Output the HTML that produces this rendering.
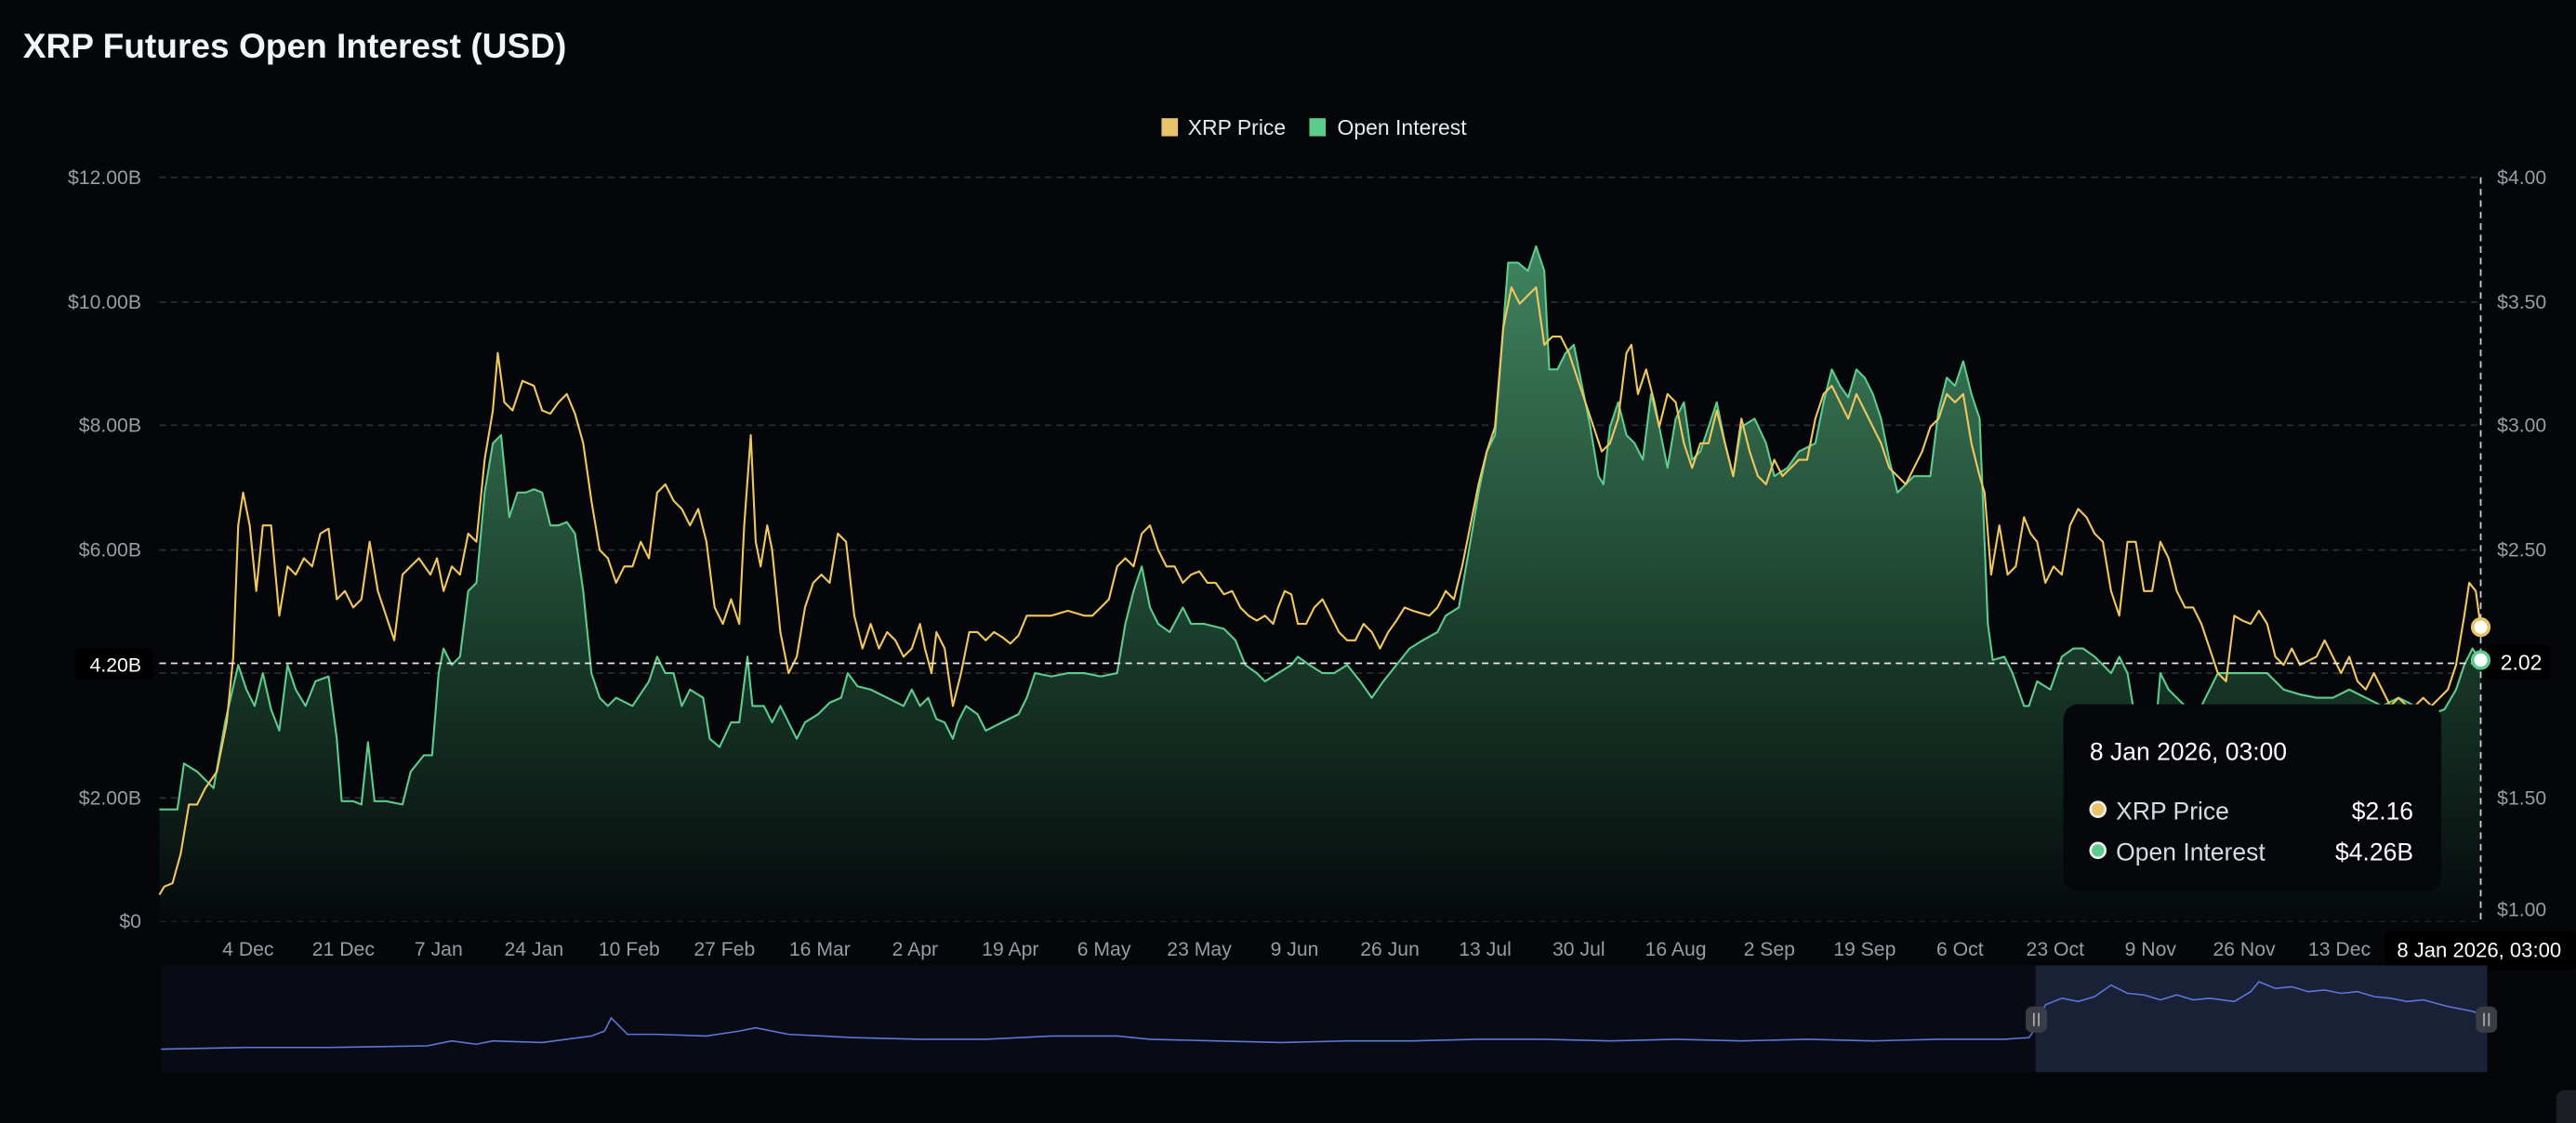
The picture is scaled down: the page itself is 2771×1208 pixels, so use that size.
<!DOCTYPE html>
<html><head><meta charset="utf-8"><style>
html,body{margin:0;padding:0;background:#04060a;width:2771px;height:1208px;overflow:hidden}
svg{display:block}
text{font-family:"Liberation Sans",sans-serif}
</style></head><body>
<svg width="2771" height="1208" viewBox="0 0 1568 684" preserveAspectRatio="none">
<defs>
<linearGradient id="g" gradientUnits="userSpaceOnUse" x1="0" y1="150" x2="0" y2="561">
<stop offset="0" stop-color="#3f8460"/><stop offset="0.3" stop-color="#2d5f45"/><stop offset="0.65" stop-color="#163426"/><stop offset="1" stop-color="#05090b"/>
</linearGradient>
</defs>
<rect width="1568" height="684" fill="#04060a"/>
<text x="14" y="35" font-size="21" font-weight="bold" fill="#f2f4f8">XRP Futures Open Interest (USD)</text>
<rect x="707" y="72" width="10" height="11" fill="#e8c468"/>
<text x="723" y="82" font-size="13" fill="#e8eaee">XRP Price</text>
<rect x="797" y="72" width="10" height="11" fill="#5ccb8c"/>
<text x="814" y="82" font-size="13" fill="#e8eaee">Open Interest</text>
<g stroke="#2a2d33" stroke-width="1" stroke-dasharray="4,3">
<line x1="97" y1="108" x2="1510" y2="108"/><line x1="97" y1="184" x2="1510" y2="184"/>
<line x1="97" y1="259" x2="1510" y2="259"/><line x1="97" y1="335" x2="1510" y2="335"/>
<line x1="97" y1="410" x2="1510" y2="410"/><line x1="97" y1="486" x2="1510" y2="486"/>
<line x1="97" y1="561" x2="1510" y2="561"/>
</g>
<g font-size="12" fill="#9a9ca3" text-anchor="end">
<text x="86" y="112">$12.00B</text><text x="86" y="188">$10.00B</text><text x="86" y="263">$8.00B</text>
<text x="86" y="339">$6.00B</text><text x="86" y="490">$2.00B</text><text x="86" y="565">$0</text>
</g>
<g font-size="12" fill="#9a9ca3">
<text x="1520" y="112">$4.00</text><text x="1520" y="188">$3.50</text><text x="1520" y="263">$3.00</text>
<text x="1520" y="339">$2.50</text><text x="1520" y="490">$1.50</text><text x="1520" y="558">$1.00</text>
</g>
<polygon fill="url(#g)" points="97,561 97,493 108,493 112,465 120,470 130,480 137,440 145,405 150,420 155,430 160,410 165,432 170,445 175,405 180,420 186,430 192,415 200,412 205,450 208,488 215,488 220,490 224,452 228,488 235,488 245,490 250,470 258,460 263,460 267,410 270,395 275,405 280,400 285,360 290,355 295,300 300,270 305,265 310,315 315,300 320,300 325,298 330,300 335,320 340,320 345,318 350,325 355,360 360,410 365,425 370,430 375,425 385,430 395,415 400,400 405,410 410,410 415,430 420,420 428,425 432,450 438,455 445,440 450,440 455,400 458,430 465,430 470,440 475,430 480,440 485,450 490,440 498,435 505,428 512,425 516,410 522,418 530,420 540,425 550,430 555,420 560,430 565,425 570,438 575,440 580,450 583,440 588,430 595,435 600,445 610,440 620,435 625,425 630,410 640,412 650,410 660,410 670,412 680,410 685,380 690,360 695,345 700,370 705,380 712,385 720,370 725,380 733,380 745,383 752,390 758,405 765,410 770,415 778,410 786,405 790,400 797,405 805,410 812,410 820,405 828,415 835,425 842,415 850,405 858,395 866,390 875,385 880,375 888,370 895,330 900,300 905,275 910,265 915,200 918,160 924,160 930,165 935,150 940,165 943,225 948,225 953,215 958,210 963,235 968,260 973,290 976,295 980,260 985,245 990,265 995,270 1000,280 1005,240 1010,260 1015,285 1020,255 1025,245 1030,280 1035,275 1040,260 1045,245 1050,270 1055,290 1060,260 1068,255 1075,270 1080,290 1088,285 1095,275 1105,270 1110,245 1115,225 1120,235 1125,242 1130,225 1135,230 1140,240 1145,255 1150,280 1155,300 1160,295 1165,290 1175,290 1180,250 1185,230 1190,235 1195,220 1200,240 1205,255 1210,380 1213,402 1220,400 1225,410 1232,430 1235,430 1240,415 1248,420 1255,400 1262,395 1268,395 1275,400 1285,410 1290,400 1295,410 1300,440 1310,470 1315,410 1320,420 1330,430 1340,430 1350,410 1360,410 1370,410 1380,410 1385,415 1390,420 1400,423 1410,425 1420,425 1430,420 1440,425 1450,430 1460,425 1470,430 1480,435 1488,432 1495,420 1500,405 1505,395 1510,403 1510,561"/>
<polyline fill="none" stroke="#5ccb8c" stroke-width="1.2" stroke-linejoin="round" points="97,493 108,493 112,465 120,470 130,480 137,440 145,405 150,420 155,430 160,410 165,432 170,445 175,405 180,420 186,430 192,415 200,412 205,450 208,488 215,488 220,490 224,452 228,488 235,488 245,490 250,470 258,460 263,460 267,410 270,395 275,405 280,400 285,360 290,355 295,300 300,270 305,265 310,315 315,300 320,300 325,298 330,300 335,320 340,320 345,318 350,325 355,360 360,410 365,425 370,430 375,425 385,430 395,415 400,400 405,410 410,410 415,430 420,420 428,425 432,450 438,455 445,440 450,440 455,400 458,430 465,430 470,440 475,430 480,440 485,450 490,440 498,435 505,428 512,425 516,410 522,418 530,420 540,425 550,430 555,420 560,430 565,425 570,438 575,440 580,450 583,440 588,430 595,435 600,445 610,440 620,435 625,425 630,410 640,412 650,410 660,410 670,412 680,410 685,380 690,360 695,345 700,370 705,380 712,385 720,370 725,380 733,380 745,383 752,390 758,405 765,410 770,415 778,410 786,405 790,400 797,405 805,410 812,410 820,405 828,415 835,425 842,415 850,405 858,395 866,390 875,385 880,375 888,370 895,330 900,300 905,275 910,265 915,200 918,160 924,160 930,165 935,150 940,165 943,225 948,225 953,215 958,210 963,235 968,260 973,290 976,295 980,260 985,245 990,265 995,270 1000,280 1005,240 1010,260 1015,285 1020,255 1025,245 1030,280 1035,275 1040,260 1045,245 1050,270 1055,290 1060,260 1068,255 1075,270 1080,290 1088,285 1095,275 1105,270 1110,245 1115,225 1120,235 1125,242 1130,225 1135,230 1140,240 1145,255 1150,280 1155,300 1160,295 1165,290 1175,290 1180,250 1185,230 1190,235 1195,220 1200,240 1205,255 1210,380 1213,402 1220,400 1225,410 1232,430 1235,430 1240,415 1248,420 1255,400 1262,395 1268,395 1275,400 1285,410 1290,400 1295,410 1300,440 1310,470 1315,410 1320,420 1330,430 1340,430 1350,410 1360,410 1370,410 1380,410 1385,415 1390,420 1400,423 1410,425 1420,425 1430,420 1440,425 1450,430 1460,425 1470,430 1480,435 1488,432 1495,420 1500,405 1505,395 1510,403"/>
<polyline fill="none" stroke="#f0c75e" stroke-width="1.2" stroke-linejoin="round" points="97,545 100,540 105,538 110,520 115,490 120,490 125,480 132,470 138,440 142,400 145,320 148,300 152,320 156,360 160,320 165,320 170,375 175,345 180,350 185,340 190,345 195,325 200,322 205,365 210,360 215,370 220,365 225,330 230,360 235,375 240,390 245,350 250,345 255,340 262,350 266,340 270,360 275,345 280,350 285,325 290,330 295,280 300,250 303,215 307,245 312,250 318,232 325,235 330,250 335,252 340,245 345,240 350,252 355,270 360,305 365,335 370,340 375,355 380,345 385,345 390,330 395,340 400,300 405,295 410,305 415,310 420,320 425,310 430,330 435,370 440,380 445,365 450,380 453,320 457,265 460,330 463,345 467,320 470,335 475,385 480,410 485,400 490,370 495,355 500,350 505,355 510,325 515,330 520,375 525,395 530,380 535,395 540,385 545,390 550,400 555,395 560,380 563,395 567,410 570,385 575,395 580,430 585,410 590,385 595,385 600,390 605,385 610,388 615,392 620,387 625,375 630,375 640,375 650,372 660,375 665,375 670,370 675,365 680,345 685,340 690,345 695,325 700,320 705,335 710,345 715,345 720,355 725,350 730,348 735,355 740,355 745,362 750,360 755,370 760,375 765,378 770,375 775,380 778,370 782,360 786,362 790,380 795,380 800,370 805,365 810,375 815,385 820,390 825,390 830,380 835,385 840,395 845,385 850,378 855,370 860,372 870,375 875,370 880,360 885,365 890,345 895,320 900,295 905,275 910,260 915,200 920,175 925,185 930,180 935,175 940,210 945,205 950,205 955,215 960,230 965,245 970,260 975,275 980,270 985,255 990,215 993,210 997,240 1002,225 1007,245 1010,260 1015,240 1020,245 1025,270 1030,285 1035,270 1040,270 1045,250 1050,270 1055,290 1060,255 1065,275 1070,290 1075,295 1080,280 1085,290 1090,285 1095,280 1100,280 1105,255 1110,240 1115,235 1120,245 1125,255 1130,240 1135,250 1140,260 1145,270 1150,285 1155,290 1160,295 1165,285 1170,275 1175,260 1180,255 1185,240 1190,245 1195,240 1200,270 1205,290 1208,300 1212,350 1217,320 1222,350 1227,345 1232,315 1236,325 1240,330 1245,355 1250,345 1255,350 1260,320 1265,310 1270,315 1275,325 1280,330 1285,360 1290,375 1295,330 1300,330 1305,360 1310,360 1315,330 1320,340 1325,360 1330,370 1335,370 1340,380 1345,395 1350,410 1355,415 1360,375 1365,378 1370,380 1375,372 1380,380 1385,400 1390,405 1395,395 1400,405 1410,400 1415,390 1420,400 1425,410 1430,400 1435,415 1440,420 1445,410 1450,420 1455,430 1460,425 1465,430 1470,430 1475,425 1480,430 1485,425 1490,420 1495,405 1500,375 1503,355 1507,360 1510,382"/>
<line x1="97" y1="404" x2="1510" y2="404" stroke="#e8e8e8" stroke-width="1" stroke-dasharray="4,3"/>
<line x1="1510" y1="108" x2="1510" y2="561" stroke="#cfcfcf" stroke-width="1" stroke-dasharray="4,3"/>
<rect x="46" y="395" width="47" height="19" rx="2" fill="#000"/>
<text x="86" y="409" font-size="12" fill="#fff" text-anchor="end">4.20B</text>
<rect x="1514" y="393" width="38" height="21" rx="2" fill="#000"/>
<text x="1522" y="408" font-size="13" fill="#fff">2.02</text>
<circle cx="1510" cy="382" r="5" fill="#fff" stroke="#e8c468" stroke-width="2"/>
<circle cx="1510" cy="402" r="5" fill="#fff" stroke="#5ccb8c" stroke-width="2"/>
<rect x="1256" y="429" width="230" height="114" rx="9" fill="#05070b"/>
<text x="1272" y="463" font-size="15" fill="#fff">8 Jan 2026, 03:00</text>
<circle cx="1277" cy="493" r="4.5" fill="#e8c468" stroke="#eee" stroke-width="1.5"/>
<circle cx="1277" cy="518" r="4.5" fill="#5ccb8c" stroke="#eee" stroke-width="1.5"/>
<text x="1288" y="499" font-size="15" fill="#d8dbe2">XRP Price</text>
<text x="1288" y="524" font-size="15" fill="#d8dbe2">Open Interest</text>
<text x="1469" y="499" font-size="15" fill="#fff" text-anchor="end">$2.16</text>
<text x="1469" y="524" font-size="15" fill="#fff" text-anchor="end">$4.26B</text>
<g font-size="12" fill="#9a9ca3" text-anchor="middle">
<text x="151" y="582">4 Dec</text><text x="209" y="582">21 Dec</text><text x="267" y="582">7 Jan</text>
<text x="325" y="582">24 Jan</text><text x="383" y="582">10 Feb</text><text x="441" y="582">27 Feb</text>
<text x="499" y="582">16 Mar</text><text x="557" y="582">2 Apr</text><text x="615" y="582">19 Apr</text>
<text x="672" y="582">6 May</text><text x="730" y="582">23 May</text><text x="788" y="582">9 Jun</text>
<text x="846" y="582">26 Jun</text><text x="904" y="582">13 Jul</text><text x="961" y="582">30 Jul</text>
<text x="1020" y="582">16 Aug</text><text x="1077" y="582">2 Sep</text><text x="1135" y="582">19 Sep</text>
<text x="1193" y="582">6 Oct</text><text x="1251" y="582">23 Oct</text><text x="1309" y="582">9 Nov</text>
<text x="1366" y="582">26 Nov</text><text x="1424" y="582">13 Dec</text>
</g>
<rect x="1452" y="567" width="116" height="24" rx="3" fill="#000"/>
<text x="1509" y="583" font-size="12.5" fill="#fff" text-anchor="middle">8 Jan 2026, 03:00</text>
<rect x="98" y="588" width="1416" height="65" fill="#080b14"/>
<rect x="1239" y="588" width="275" height="65" fill="#1a2036"/>
<path d="M98,639 L150,638 L200,638 L260,637 L275,634 L290,636 L300,634 L330,635 L360,631 L368,628 L372,620 L376,624 L382,630 L400,630 L430,631 L450,628 L460,626 L480,630 L520,632 L560,633 L600,633 L640,631 L680,631 L700,633 L740,634 L780,635 L820,634 L860,634 L900,633 L940,633 L980,634 L1020,633 L1060,634 L1100,633 L1140,634 L1180,633 L1220,633 L1235,632 L1240,625 L1245,612 L1255,608 L1265,610 L1275,607 L1285,600 L1295,605 L1305,606 L1315,609 L1325,606 L1335,609 L1345,608 L1360,610 L1370,604 L1375,598 L1385,602 L1395,601 L1405,604 L1415,603 L1425,605 L1435,604 L1445,607 L1455,608 L1465,610 L1475,609 L1490,613 L1505,616 L1513,619" fill="none" stroke="#5b77d8" stroke-width="0.9"/>
<rect x="1233" y="613" width="13" height="16" rx="4" fill="#3a3d46"/>
<rect x="1507" y="613" width="13" height="16" rx="4" fill="#3a3d46"/>
<g stroke="#aaa" stroke-width="1"><line x1="1238" y1="617" x2="1238" y2="625"/><line x1="1241" y1="617" x2="1241" y2="625"/><line x1="1512" y1="617" x2="1512" y2="625"/><line x1="1515" y1="617" x2="1515" y2="625"/></g>
<rect x="1556" y="664" width="20" height="24" rx="5" fill="#1c1f26"/>
</svg>
</body></html>
